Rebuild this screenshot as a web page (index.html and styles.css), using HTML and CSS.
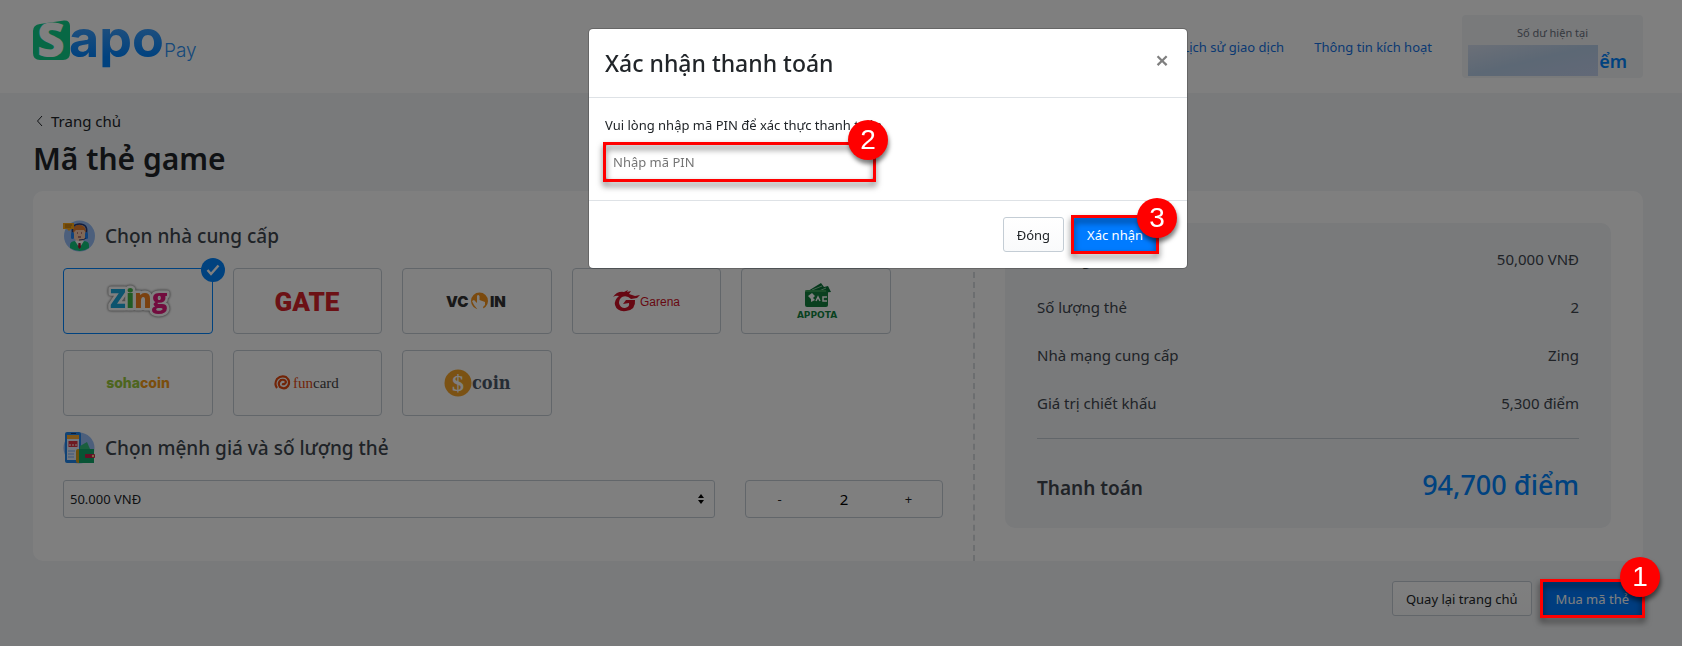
FILE: index.html
```html
<!DOCTYPE html>
<html lang="vi">
<head>
<meta charset="utf-8">
<meta name="viewport" content="width=device-width, initial-scale=1">
<title>Mã thẻ game - Sapo Pay</title>
<link rel="stylesheet" href="styles.css">
</head>
<body>
<header class="topbar">
  <a class="brand" href="#" aria-label="Sapo Pay">
    <svg width="166" height="54" viewBox="0 0 166 54">
      <defs>
        <linearGradient id="blue" x1="0" y1="0" x2="0" y2="1">
          <stop offset="0.3" stop-color="#3f9ffb"/><stop offset="0.8" stop-color="#0084ff"/>
        </linearGradient>
      </defs>
      <path d="M7 4 31 0.400Q37 0 37 6V33Q37 40 30 40H7Q0 40 0 33V11Q0 5 7 4Z" fill="#0fd08a"/>
      <text class="logo-s" x="4" y="37">S</text>
      <text class="logo-apo" x="36" y="37" fill="url(#blue)">apo</text>
      <text class="logo-pay" x="131" y="37">Pay</text>
    </svg>
  </a>
  <nav class="topnav">
    <a href="#">Lịch sử giao dịch</a>
    <a href="#">Thông tin kích hoạt</a>
  </nav>
  <div class="balance">
    <span class="balance-label">Số dư hiện tại</span>
    <span class="balance-value"><span class="balance-hidden"></span>ểm</span>
  </div>
</header>

<main class="content">
  <a class="back" href="#">
    <svg width="7" height="12" viewBox="0 0 7 12" fill="none" stroke="#212529"><path d="M6 1 1.500 6 6 11"/></svg>
    Trang chủ
  </a>
  <h1 class="title">Mã thẻ game</h1>

  <div class="card">
    <section class="choose">
      <h2 class="step">
        <svg width="32" height="32" viewBox="0 0 32 32">
          <circle cx="16.500" cy="16" r="15.500" fill="#98bff8"/>
          <path d="M7 31V25Q7 21 13 21H20Q26 21 26 25V28Q17 34 7 28Z" fill="#12c47c"/>
          <path d="M12 21 16.500 28 21 21 16.500 18Z" fill="#fff"/>
          <path d="M15.500 23H17.500L18 27 16.500 29 15 27Z" fill="#a31530"/>
          <path d="M10 11Q10 5 16.500 5T23 11V15Q22 21 16.500 21T10 15Z" fill="#ffd0b0"/>
          <path d="M10 13V9Q12 4 18 5 23 6 23 13L21 10H13Z" fill="#e88030"/>
          <path d="M9.500 13Q8 4 16.500 4T23.500 13" fill="none" stroke="#293d7c" stroke-width="1.500"/>
          <rect x="8" y="12" width="3" height="7" rx="1.500" fill="#2385f7"/><rect x="22" y="12" width="3" height="7" rx="1.500" fill="#2385f7"/>
          <path d="M14 13H15M18 13H19M15 17H18" stroke="#772f44" stroke-width="1.200"/>
          <path d="M23 18Q22 20 16 20" stroke="#293d7c" fill="none"/>
          <path d="M0 3H11V9H8L6 11 4 9H0Z" fill="#ffa915"/><path d="M2 5H9M2 7H8" stroke="#a96a12"/>
        </svg>
        Chọn nhà cung cấp
      </h2>
      <div class="providers">
        <button class="provider selected" type="button" aria-label="Zing">
          <svg class="zing-logo" width="70" height="36" viewBox="0 0 70 36">
            <text class="zing" x="7" y="25"><tspan fill="#1aa8dc">Z</tspan><tspan fill="#43b649">i</tspan><tspan fill="#f58220">n</tspan><tspan fill="#e5197d">g</tspan></text>
          </svg>
          <span class="tick"><svg width="14" height="12" viewBox="0 0 14 12" fill="none" stroke="#fff" stroke-width="2.400"><path d="M1.500 6 5 10 12.500 1.500"/></svg></span>
        </button>
        <button class="provider" type="button" aria-label="Gate">
          <svg width="70" height="36" viewBox="0 0 70 36"><text class="gate" x="35" y="28" text-anchor="middle">GATE</text></svg>
        </button>
        <button class="provider" type="button" aria-label="Vcoin">
          <svg width="70" height="36" viewBox="0 0 70 36">
            <circle cx="37.500" cy="18" r="8.500" fill="#f7941d"/>
            <path d="M30 18 32 17 35 20V13Q36 11 37.500 13V17L43 19V22L41 24 42 27H36L32 22Z" fill="#fff"/>
            <text class="vcoin" x="4" y="24">VC</text>
            <text class="vcoin" x="48" y="24">IN</text>
          </svg>
        </button>
        <button class="provider" type="button" aria-label="Garena">
          <svg width="70" height="36" viewBox="0 0 70 36">
            <path d="M1 14Q5 8 12 9L16 7 15 9 19 8 17 11 23 13 28 12 25 15 19 16Q15 12 10 14 7 16 7 20 8 25 13 25 18 24 17 20L11 21 14 17H23Q24 27 14 28 5 29 3 22 2 17 7 13Q4 12 1 14Z" fill="#cf1126"/>
            <text class="garena" x="28" y="23">Garena</text>
          </svg>
        </button>
        <button class="provider" type="button" aria-label="Appota">
          <svg width="70" height="44" viewBox="0 0 70 44">
            <path d="M27 12 40 4 43 8 47 7 50 13 30 15Z" fill="#087238"/><path d="M31 11 41 7M38 12 45 9" stroke="#8cc69c"/>
            <rect x="24" y="11" width="23" height="17" rx="2" fill="#14813f"/>
            <path d="M24 12H45" stroke="#59b96d"/>
            <path d="M27 17 31 14 34 17 32 19 34 21 30 23 30 20Z" fill="#fff"/><path d="M35 22 37 18 39 22M46 18H42V22H46" stroke="#fff" fill="none" stroke-width="1.500"/>
            <text class="appota" x="36" y="39" text-anchor="middle">APPOTA</text>
          </svg>
        </button>
        <button class="provider" type="button" aria-label="Sohacoin">
          <svg width="70" height="36" viewBox="0 0 70 36"><text class="soha" x="35" y="23" text-anchor="middle"><tspan fill="#9bcb3c">soha</tspan><tspan fill="#f59c1a">coin</tspan></text></svg>
        </button>
        <button class="provider" type="button" aria-label="Funcard">
          <svg width="70" height="36" viewBox="0 0 70 36">
            <path d="M5 23Q2 19 5 14 9 10 14 12 19 16 16 21 13 25 8 22 5 18 9 15 13 14 14 17 13 20 10 19" fill="none" stroke="#e5490f" stroke-width="2.200"/>
            <text class="funcard" x="21" y="23"><tspan fill="#e5490f">fun</tspan><tspan fill="#444">card</tspan></text>
          </svg>
        </button>
        <button class="provider" type="button" aria-label="Scoin">
          <svg width="70" height="36" viewBox="0 0 70 36">
            <circle cx="16" cy="18" r="13.500" fill="#f7a428"/>
            <text class="dollar" x="16" y="26" text-anchor="middle">$</text>
            <text class="scoin" x="30" y="24">coin</text>
          </svg>
        </button>
      </div>

      <h2 class="step">
        <svg width="32" height="32" viewBox="0 0 32 32">
          <circle cx="16" cy="16" r="15.500" fill="#98bff8"/>
          <rect x="2" y="0" width="16" height="31" rx="2" fill="#2187ec"/>
          <rect x="4" y="3" width="12" height="25" fill="#e4efff"/><rect x="4" y="3" width="12" height="4" fill="#ffad31"/>
          <path d="M8 1.500H13" stroke="#193d78"/>
          <rect x="5.500" y="9" width="9" height="6" fill="#dc3545"/><path d="M6 13H14" stroke="#fff" stroke-dasharray="2 1"/>
          <path d="M5 19H12M5 22H11M5 25H11" stroke="#76adf4"/>
          <path d="M17 14 24 10 27 17H17Z" fill="#35bf7d"/>
          <rect x="13" y="17" width="18" height="14" rx="2" fill="#d9a018"/><path d="M16 17H31V31H16Z" fill="#10a96a"/>
          <rect x="22" y="22" width="10" height="4" rx="1" fill="#c91f4a"/><circle cx="30" cy="24" r="1.200" fill="#ffd67b"/>
        </svg>
        Chọn mệnh giá và số lượng thẻ
      </h2>
      <div class="amount">
        <div class="select-wrap">
          <select class="price" aria-label="Mệnh giá"><option>50.000 VNĐ</option></select>
          <svg class="arrows" width="6" height="10" viewBox="0 0 6 10"><path d="M3 0 6 4H0ZM3 10 6 6H0Z" fill="#000"/></svg>
        </div>
        <div class="counter">
          <button type="button" aria-label="Giảm">-</button>
          <input type="text" value="2" aria-label="Số lượng thẻ">
          <button type="button" aria-label="Tăng">+</button>
        </div>
      </div>
    </section>

    <section class="review">
      <div class="summary">
        <dl class="lines">
          <div><dt>Mệnh giá</dt><dd>50,000 VNĐ</dd></div>
          <div><dt>Số lượng thẻ</dt><dd>2</dd></div>
          <div><dt>Nhà mạng cung cấp</dt><dd>Zing</dd></div>
          <div><dt>Giá trị chiết khấu</dt><dd>5,300 điểm</dd></div>
        </dl>
        <div class="total"><span>Thanh toán</span><strong>94,700 điểm</strong></div>
      </div>
    </section>
  </div>

  <div class="actions">
    <button class="btn" type="button">Quay lại trang chủ</button>
    <div class="marked">
      <button class="btn primary" type="button">Mua mã thẻ</button>
      <span class="frame"></span><span class="badge">1</span>
    </div>
  </div>
</main>

<div class="backdrop"></div>
<div class="modal">
  <form class="dialog" role="dialog" aria-labelledby="dialog-title">
    <div class="dialog-head">
      <h2 id="dialog-title">Xác nhận thanh toán</h2>
      <button class="close" type="button" aria-label="Đóng cửa sổ">×</button>
    </div>
    <div class="dialog-body">
      <label for="pin">Vui lòng nhập mã PIN để xác thực thanh toán</label>
      <div class="marked pin-field">
        <input id="pin" type="text" placeholder="Nhập mã PIN">
        <span class="frame"></span><span class="badge">2</span>
      </div>
    </div>
    <div class="dialog-foot">
      <button class="btn" type="button">Đóng</button>
      <div class="marked">
        <button class="btn primary" type="button">Xác nhận</button>
        <span class="frame"></span><span class="badge">3</span>
      </div>
    </div>
  </form>
</div>
</body>
</html>
```

FILE: styles.css
```css
* { box-sizing: border-box; }
body {
  margin: 0;
  min-height: 100vh;
  background: #f2f4f7;
  color: #212529;
  font: 13px/20px "Noto Sans", "Open Sans", sans-serif;
}
h1, h2, dl, dd { margin: 0; }
button, input, select { font: inherit; color: inherit; }
a { text-decoration: none; }
svg { overflow: visible; }

/* Top bar */
.topbar {
  display: flex;
  align-items: center;
  min-height: 93px;
  padding: 15px 39px 15px 33px;
  background: #fff;
}
.brand { margin-right: auto; }
.brand svg { display: block; }
.logo-s { font: 800 48px "Open Sans", sans-serif; fill: #fff; }
.logo-apo { font: 700 52px Inter, sans-serif; }
.logo-pay { font: 300 19px Inter, sans-serif; fill: #2f93f5; }
.topnav { display: flex; gap: 30px; margin-right: 30px; }
.topnav a { color: #1473e6; }
.balance {
  width: 181px;
  min-height: 63px;
  padding: 10px 16px 2px 6px;
  border-radius: 4px;
  background: #f2f4f7;
}
.balance-label {
  display: block;
  padding-left: 10px;
  color: #6b7280;
  font-size: 11px;
  line-height: 16px;
  margin-bottom: 4px;
  text-align: center;
}
.balance-value {
  display: flex;
  align-items: center;
  justify-content: flex-end;
  gap: 1px;
  color: #0084ff;
  font-size: 18px;
  font-weight: 600;
  line-height: 28px;
}
.balance-hidden {
  flex: 1;
  height: 31px;
  background: linear-gradient(to bottom right, #d7e0f0, #b9d0ea 50%, #c5d2ef);
}

/* Page */
.content { padding: 16px 39px 24px 33px; }
.back {
  display: flex;
  align-items: center;
  gap: 8px;
  width: fit-content;
  padding-left: 3px;
  color: #212529;
  font-size: 15px;
  line-height: 24px;
}
.title { margin: 6px 0 12px; font-size: 30px; font-weight: 600; line-height: 40px; }
.card {
  display: grid;
  grid-template-columns: 942fr 668fr;
  border-radius: 10px;
  background: #fff;
}
.choose { padding: 29px 30px 43px; border-right: 2px dashed #d9dce0; }
.step {
  display: flex;
  align-items: center;
  gap: 10px;
  margin-bottom: 16px;
  color: #40474f;
  font-size: 19px;
  font-weight: 500;
  line-height: 32px;
}
.providers {
  display: grid;
  grid-template-columns: repeat(5, 1fr);
  gap: 16px 20px;
  margin: 0 52px 16px 0;
}
.provider {
  position: relative;
  display: flex;
  align-items: center;
  justify-content: center;
  height: 66px;
  padding: 0;
  border: 1px solid #c4cdd5;
  border-radius: 4px;
  background: #fff;
}
.provider.selected { border-color: #0084ff; }
.tick {
  position: absolute;
  top: -11px;
  right: -13px;
  display: grid;
  place-items: center;
  width: 24px;
  height: 24px;
  border-radius: 50%;
  background: #0084ff;
}
.zing {
  font: 800 26px "Open Sans", sans-serif;
  stroke: #fff;
  stroke-width: 5px;
  stroke-linejoin: round;
  paint-order: stroke;
}
.zing-logo { filter: drop-shadow(0 0 1px #888) drop-shadow(0 0 1px #aaa); }
.gate { font: 900 26px Roboto, sans-serif; fill: #d8232a; }
.vcoin { font: 900 15px Inter, sans-serif; fill: #333; }
.garena { font: 12px "Liberation Sans", sans-serif; fill: #cf1126; }
.appota { font: 700 9px "DejaVu Sans", sans-serif; fill: #128542; }
.soha { font: 800 14px Inter, sans-serif; }
.funcard { font: 15px "Liberation Serif", serif; }
.dollar { font: 700 24px "Liberation Serif", serif; fill: #fff; }
.scoin { font: 700 18px "DejaVu Serif Condensed", "DejaVu Serif", serif; fill: #4b596b; }

.amount { display: flex; gap: 30px; }
.select-wrap { position: relative; flex: 1; }
.price {
  width: 100%;
  height: 38px;
  padding: 0 30px 0 6px;
  border: 1px solid #c4cdd5;
  border-radius: 3px;
  background: #fff;
  appearance: none;
}
.arrows { position: absolute; top: 14px; right: 11px; pointer-events: none; }
.counter {
  display: flex;
  justify-content: space-between;
  width: 198px;
  height: 38px;
  border: 1px solid #c4cdd5;
  border-radius: 4px;
}
.counter button { width: 67px; border: 0; background: none; }
.counter input { width: 60px; border: 0; background: none; color: #000; font-size: 15px; text-align: center; }

.review { padding: 32px 32px 32px 30px; }
.summary { padding: 12px 32px 16px; border-radius: 10px; background: #f2f4f7; color: #40474f; }
.lines { padding-bottom: 11px; border-bottom: 1px solid #c4cdd5; font-size: 15px; line-height: 48px; }
.lines div, .total { display: flex; justify-content: space-between; }
.total { align-items: baseline; padding-top: 22px; font-size: 19px; font-weight: 600; line-height: 48px; }
.total strong { color: #0084ff; font-size: 27px; font-weight: 500; }
.actions { display: flex; justify-content: flex-end; gap: 10px; margin-top: 20px; }

/* Buttons */
.btn {
  display: block;
  height: 35px;
  padding: 0 13px;
  border: 1px solid #c4cdd5;
  border-radius: 3px;
  background: linear-gradient(#fff, #f9fafb);
  white-space: nowrap;
}
.btn.primary { border-color: #007bff; background: #007bff; color: #fff; }

/* Numbered callouts */
.marked { position: relative; }
.frame {
  position: absolute;
  z-index: 30;
  inset: -2px;
  border: 3px solid #f00;
  filter: drop-shadow(0 4px 3px rgba(0, 0, 0, .6));
  pointer-events: none;
}
.badge {
  position: absolute;
  z-index: 31;
  top: -24px;
  right: -17px;
  width: 40px;
  height: 40px;
  border-radius: 50%;
  background: #f00;
  box-shadow: 1px 4px 4px rgba(0, 0, 0, .5);
  color: #fff;
  font: 28px/40px "Liberation Sans", sans-serif;
  text-align: center;
}
.pin-field .badge { right: -14px; }
.dialog-foot .badge { top: -19px; right: -20px; }

/* Confirmation dialog */
.backdrop { position: fixed; z-index: 10; inset: 0; background: rgba(0, 0, 0, .5); }
.modal { position: fixed; z-index: 20; inset: 0; padding: 28px 0 0 94px; }
.dialog {
  max-width: 600px;
  margin: 0 auto;
  border: 1px solid rgba(0, 0, 0, .2);
  border-radius: 5px;
  background: #fff;
  background-clip: padding-box;
}
.dialog-head {
  display: flex;
  justify-content: space-between;
  padding: 16px;
  border-bottom: 1px solid #dee2e6;
}
.dialog-head h2 { font-size: 23px; font-weight: 500; line-height: 36px; }
.close {
  width: 18px;
  height: 30px;
  padding: 0;
  border: 0;
  background: none;
  color: #7f7f7f;
  font-size: 24px;
  font-weight: 600;
  line-height: 30px;
}
.dialog-body { padding: 17px 16px 20px; }
.dialog-body label { display: block; margin-bottom: 9px; }
.pin-field { width: 269px; }
.pin-field input {
  display: block;
  width: 100%;
  height: 36px;
  padding: 0 7px;
  border: 1px solid #c4cdd5;
  border-radius: 3px;
}
.pin-field input::placeholder { color: #757575; opacity: 1; }
.dialog-foot {
  display: flex;
  justify-content: flex-end;
  gap: 9px;
  padding: 16px 30px 16px 16px;
  border-top: 1px solid #dee2e6;
}
```
